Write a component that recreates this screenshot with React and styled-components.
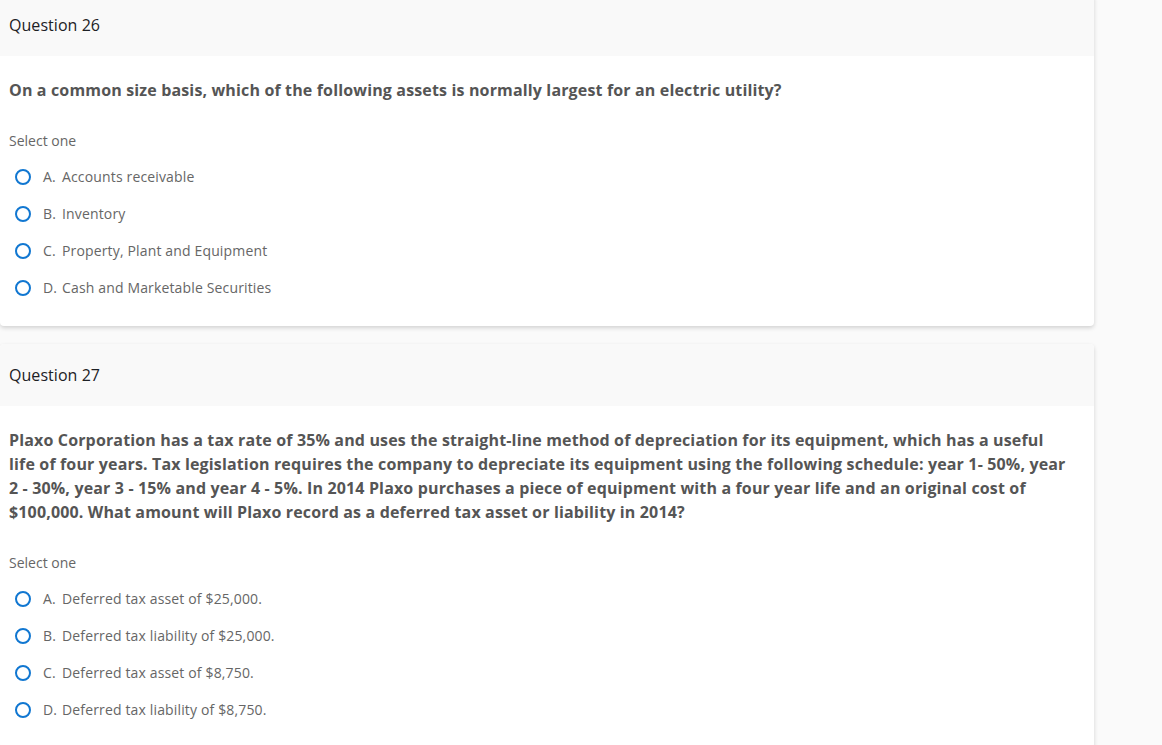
import React from 'react'
import styled, { createGlobalStyle } from 'styled-components'

const GlobalStyle = createGlobalStyle`
    html, body {
        margin: 0;
        padding: 0;
        background: #fafafa;
        font-family: "Open Sans", "Liberation Sans", sans-serif;
    }
`

const Page = styled.div`
    width: 1094px;
    margin-top: -6px;
    display: flex;
    flex-direction: column;
    gap: 18px;
`

const Card = styled.div`
    background: #fff;
    border-radius: 4px;
    box-shadow: 0 2px 4px rgba(0, 0, 0, 0.16);
    overflow: hidden;
`

const CardHeader = styled.div`
    background: #f9f9f9;
    padding: 19px 9px;
`

const Title = styled.h3`
    margin: 0;
    font-size: 16px;
    line-height: 24px;
    font-weight: 400;
    color: #1d2125;
    letter-spacing: 0.05px;
`

const CardBody = styled.div`
    padding: 22px 24px 20px 9px;
`

const QuestionText = styled.p`
    margin: 0;
    font-size: 16px;
    line-height: 24px;
    font-weight: 700;
    letter-spacing: 0.15px;
    color: #555;
`

const Prompt = styled.div`
    margin-top: 28px;
    font-size: 14px;
    line-height: 21px;
    color: #666;
`

const OptionList = styled.div`
    margin-top: 7px;
    display: flex;
    flex-direction: column;
`

const OptionRow = styled.label`
    display: flex;
    align-items: center;
    height: 37px;
    padding-left: 6px;
    font-size: 14px;
    letter-spacing: 0.15px;
    color: #666;
    cursor: pointer;
`

const Radio = styled.span`
    width: 12px;
    height: 12px;
    border: 2px solid #1177d1;
    border-radius: 50%;
    flex: none;
`

const Letter = styled.span`
    margin-left: 12px;
    width: 19px;
`

const questions = [
    {
        number: 26,
        text: 'On a common size basis, which of the following assets is normally largest for an electric utility?',
        options: [
            ['A.', 'Accounts receivable'],
            ['B.', 'Inventory'],
            ['C.', 'Property, Plant and Equipment'],
            ['D.', 'Cash and Marketable Securities'],
        ],
    },
    {
        number: 27,
        text: 'Plaxo Corporation has a tax rate of 35% and uses the straight-line method of depreciation for its equipment, which has a useful life of four years. Tax legislation requires the company to depreciate its equipment using the following schedule: year 1- 50%, year 2 - 30%, year 3 - 15% and year 4 - 5%. In 2014 Plaxo purchases a piece of equipment with a four year life and an original cost of $100,000. What amount will Plaxo record as a deferred tax asset or liability in 2014?',
        options: [
            ['A.', 'Deferred tax asset of $25,000.'],
            ['B.', 'Deferred tax liability of $25,000.'],
            ['C.', 'Deferred tax asset of $8,750.'],
            ['D.', 'Deferred tax liability of $8,750.'],
        ],
    },
]

const App = () => (
    <>
        <GlobalStyle />
        <Page>
            {questions.map(q => (
                <Card key={q.number}>
                    <CardHeader>
                        <Title>Question {q.number}</Title>
                    </CardHeader>
                    <CardBody>
                        <QuestionText>{q.text}</QuestionText>
                        <Prompt>Select one</Prompt>
                        <OptionList>
                            {q.options.map(([letter, label]) => (
                                <OptionRow key={letter}>
                                    <Radio />
                                    <Letter>{letter}</Letter>
                                    <span>{label}</span>
                                </OptionRow>
                            ))}
                        </OptionList>
                    </CardBody>
                </Card>
            ))}
        </Page>
    </>
)

export default App
